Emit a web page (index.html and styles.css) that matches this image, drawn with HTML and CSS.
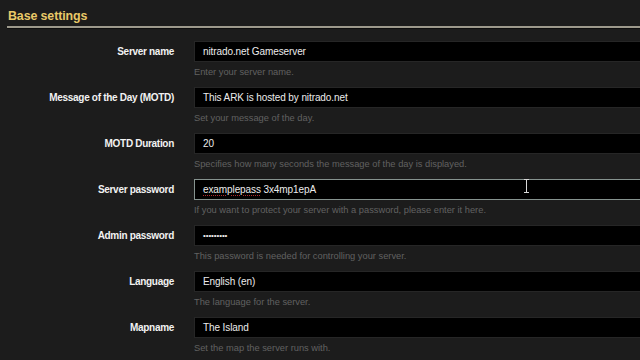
FILE: index.html
```html
<!DOCTYPE html>
<html>
<head>
<meta charset="utf-8">
<link rel="stylesheet" href="styles.css">
</head>
<body>
<div class="page">
  <h2 class="section-title">Base settings</h2>
  <div class="form">
    <div class="row">
      <div class="label">Server name</div>
      <div class="field">
        <div class="input">nitrado.net Gameserver</div>
        <div class="help">Enter your server name.</div>
      </div>
    </div>
    <div class="row">
      <div class="label">Message of the Day (MOTD)</div>
      <div class="field">
        <div class="input">This ARK is hosted by nitrado.net</div>
        <div class="help">Set your message of the day.</div>
      </div>
    </div>
    <div class="row">
      <div class="label">MOTD Duration</div>
      <div class="field">
        <div class="input">20</div>
        <div class="help">Specifies how many seconds the message of the day is displayed.</div>
      </div>
    </div>
    <div class="row">
      <div class="label">Server password</div>
      <div class="field">
        <div class="input focused"><span class="spell">examplepass</span> 3x4mp1epA
          <svg class="ibeam" width="7" height="14" viewBox="0 0 7 14"><path d="M1 0.5h5M3.5 0.5v13M1 13.5h5" stroke="#d8d8d8" stroke-width="1" fill="none"/></svg>
        </div>
        <div class="help">If you want to protect your server with a password, please enter it here.</div>
      </div>
    </div>
    <div class="row">
      <div class="label">Admin password</div>
      <div class="field">
        <div class="input"><span class="dots">•••••••••</span></div>
        <div class="help">This password is needed for controlling your server.</div>
      </div>
    </div>
    <div class="row">
      <div class="label">Language</div>
      <div class="field">
        <div class="input">English (en)</div>
        <div class="help">The language for the server.</div>
      </div>
    </div>
    <div class="row">
      <div class="label">Mapname</div>
      <div class="field">
        <div class="input">The Island</div>
        <div class="help">Set the map the server runs with.</div>
      </div>
    </div>
  </div>
</div>
</body>
</html>
```
FILE: styles.css
```css
html, body {
  margin: 0;
  padding: 0;
  background: #1c1c1c;
  overflow: hidden;
}
.page {
  width: 640px;
  height: 360px;
  overflow: hidden;
  font-family: "Liberation Sans", Arial, sans-serif;
}
.section-title {
  margin: 0 0 0 7px;
  padding: 9px 0 3px 1px;
  font-size: 12.4px;
  line-height: 14px;
  font-weight: bold;
  color: #e9c968;
  letter-spacing: -0.1px;
  border-bottom: 2px solid #9d998c;
  box-shadow: 0 1px 0 #0e0e0e;
}
.form {
  padding-top: 13px;
  display: flex;
  flex-direction: column;
}
.row {
  display: grid;
  grid-template-columns: 174px 1fr;
  column-gap: 20px;
}
.label {
  text-align: right;
  font-weight: bold;
  font-size: 10px;
  letter-spacing: -0.3px;
  line-height: 21px;
  color: #f2f2f2;
  white-space: nowrap;
}
.field {
  display: flex;
  flex-direction: column;
  margin-right: -20px;
}
.input {
  position: relative;
  box-sizing: border-box;
  height: 21px;
  background: #000;
  border: 1px solid #262626;
  padding-left: 8px;
  font-size: 10px;
  letter-spacing: -0.1px;
  line-height: 19px;
  color: #ececec;
  white-space: nowrap;
}
.input.focused {
  border-color: #86938f;
}
.spell {
  text-decoration: underline dotted #b02a2d 1px;
  text-underline-offset: 2px;
}
.dots {
  font-size: 8px;
  letter-spacing: -0.1px;
  vertical-align: 1px;
}
.ibeam {
  position: absolute;
  left: 328px;
  top: -1px;
}
.help {
  font-size: 9.3px;
  line-height: 20px;
  margin-bottom: 5px;
  color: #616161;
  white-space: nowrap;
}
```
